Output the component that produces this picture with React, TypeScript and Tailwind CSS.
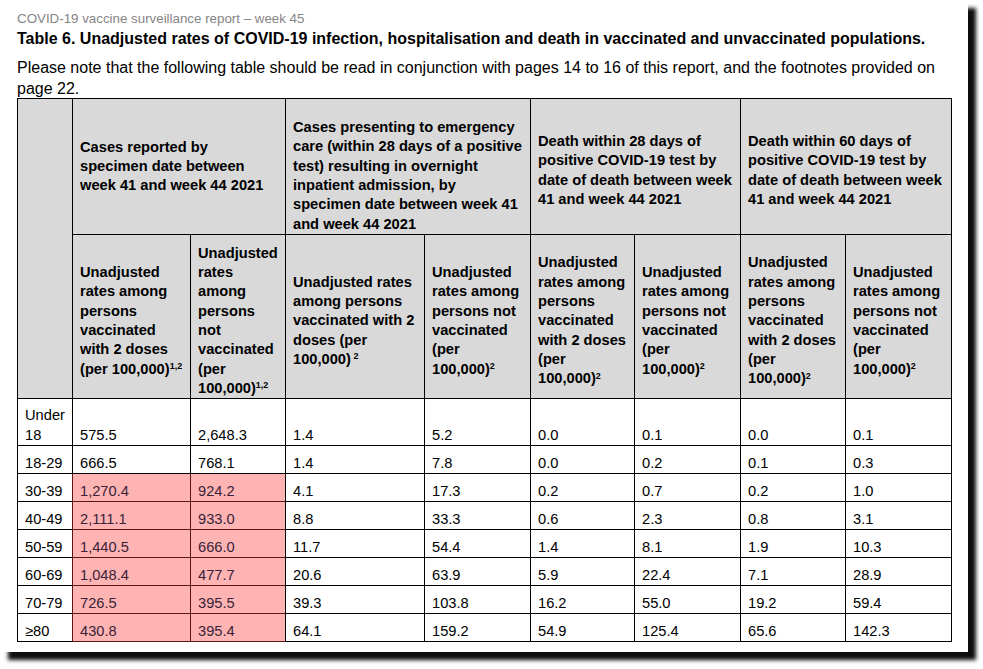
const headGroups = [
  {
    pad: 'pt-0',
    lines: ['Cases reported by', 'specimen date between', 'week 41 and week 44 2021'],
  },
  {
    pad: 'pt-[19px]',
    lines: [
      'Cases presenting to emergency',
      'care (within 28 days of a positive',
      'test) resulting in overnight',
      'inpatient admission, by',
      'specimen date between week 41',
      'and week 44 2021',
    ],
  },
  {
    pad: 'pt-[8px]',
    lines: ['Death within 28 days of', 'positive COVID-19 test by', 'date of death between week', '41 and week 44 2021'],
  },
  {
    pad: 'pt-[8px]',
    lines: ['Death within 60 days of', 'positive COVID-19 test by', 'date of death between week', '41 and week 44 2021'],
  },
]

const subHeads: { lines: string[]; sup: string; gap?: boolean }[] = [
  { lines: ['Unadjusted', 'rates among', 'persons', 'vaccinated', 'with 2 doses', '(per 100,000)'], sup: '1,2' },
  { lines: ['Unadjusted', 'rates', 'among', 'persons', 'not', 'vaccinated', '(per', '100,000)'], sup: '1,2' },
  { lines: ['Unadjusted rates', 'among persons', 'vaccinated with 2', 'doses (per', '100,000)'], sup: '2', gap: true },
  { lines: ['Unadjusted', 'rates among', 'persons not', 'vaccinated', '(per', '100,000)'], sup: '2' },
  { lines: ['Unadjusted', 'rates among', 'persons', 'vaccinated', 'with 2 doses', '(per', '100,000)'], sup: '2' },
  { lines: ['Unadjusted', 'rates among', 'persons not', 'vaccinated', '(per', '100,000)'], sup: '2' },
  { lines: ['Unadjusted', 'rates among', 'persons', 'vaccinated', 'with 2 doses', '(per', '100,000)'], sup: '2' },
  { lines: ['Unadjusted', 'rates among', 'persons not', 'vaccinated', '(per', '100,000)'], sup: '2' },
]

const rows: { age: string; values: string[]; flag?: boolean }[] = [
  { age: 'Under 18', values: ['575.5', '2,648.3', '1.4', '5.2', '0.0', '0.1', '0.0', '0.1'] },
  { age: '18-29', values: ['666.5', '768.1', '1.4', '7.8', '0.0', '0.2', '0.1', '0.3'] },
  { age: '30-39', values: ['1,270.4', '924.2', '4.1', '17.3', '0.2', '0.7', '0.2', '1.0'], flag: true },
  { age: '40-49', values: ['2,111.1', '933.0', '8.8', '33.3', '0.6', '2.3', '0.8', '3.1'], flag: true },
  { age: '50-59', values: ['1,440.5', '666.0', '11.7', '54.4', '1.4', '8.1', '1.9', '10.3'], flag: true },
  { age: '60-69', values: ['1,048.4', '477.7', '20.6', '63.9', '5.9', '22.4', '7.1', '28.9'], flag: true },
  { age: '70-79', values: ['726.5', '395.5', '39.3', '103.8', '16.2', '55.0', '19.2', '59.4'], flag: true },
  { age: '≥80', values: ['430.8', '395.4', '64.1', '159.2', '54.9', '125.4', '65.6', '142.3'], flag: true },
]

function Lines({ lines, sup, gap }: { lines: string[]; sup?: string; gap?: boolean }) {
  return (
    <div className="whitespace-nowrap">
      {lines.map((l, i) => (
        <div key={i}>
          {l}
          {sup && i === lines.length - 1 && (
            <sup className="text-[9px]">
              {gap ? '\u00a0' : ''}
              {sup}
            </sup>
          )}
        </div>
      ))}
    </div>
  )
}

export default function App() {
  return (
    <div className="min-h-screen bg-white font-['Liberation_Sans',Arial,sans-serif] text-black">
      <div className="h-[652px] w-[968px] bg-white px-[17px] pt-[11px] shadow-[8px_8px_4px_rgba(0,0,0,0.95)]">
        <p className="text-[13.33px] leading-[16px] text-[#858585]">
          COVID-19 vaccine surveillance report – week 45
        </p>
        <h1 className="mt-[3px] text-[16px] leading-[18px] font-bold">
          Table 6. Unadjusted rates of COVID-19 infection, hospitalisation and death in vaccinated and unvaccinated
          populations.
        </h1>
        <p className="mt-[9px] h-[41px] whitespace-nowrap text-[16px] leading-[21px]">
          Please note that the following table should be read in conjunction with pages 14 to 16 of this report, and
          the footnotes provided on
          <br />
          page 22.
        </p>

        <div className="grid w-[935px] grid-cols-[55px_118px_95px_139px_106px_104px_106px_105px_106px] grid-rows-[136px_164px_47px_repeat(7,28px)] border-t border-l border-black text-[14.67px] leading-[19.3px]">
          <div className="row-span-2 border-r border-b border-black bg-[#d9d9d9]" />
          {headGroups.map((g, i) => (
            <div
              key={i}
              className={`col-span-2 flex items-center border-r border-b border-black bg-[#d9d9d9] pl-[7px] font-bold ${g.pad}`}
            >
              <Lines lines={g.lines} />
            </div>
          ))}
          {subHeads.map((s, i) => (
            <div
              key={i}
              className="flex items-center border-r border-b border-black bg-[#d9d9d9] pt-[9px] pl-[7px] font-bold"
            >
              <Lines lines={s.lines} sup={s.sup} gap={s.gap} />
            </div>
          ))}
          {rows.map((r) => (
            <Row key={r.age} age={r.age} values={r.values} flag={r.flag} />
          ))}
        </div>
      </div>
    </div>
  )
}

function Row({ age, values, flag }: { age: string; values: string[]; flag?: boolean }) {
  return (
    <>
      <div
        className={`flex items-end border-b border-black pl-[7px] ${flag ? 'border-r border-r-[#5a1515]' : 'border-r'}`}
      >
        {age === 'Under 18' ? (
          <div>
            Under
            <br />
            18
          </div>
        ) : (
          age
        )}
      </div>
      {values.map((v, i) =>
        flag && i < 2 ? (
          <div
            key={i}
            className={`flex items-end border-b border-[#5a1515] bg-[#ffb4b4] pl-[7px] text-[#3a2238] ${
              i === 0 ? 'border-r' : 'border-r border-r-black'
            }`}
          >
            {v}
          </div>
        ) : (
          <div key={i} className="flex items-end border-r border-b border-black pl-[7px]">
            {v}
          </div>
        ),
      )}
    </>
  )
}
